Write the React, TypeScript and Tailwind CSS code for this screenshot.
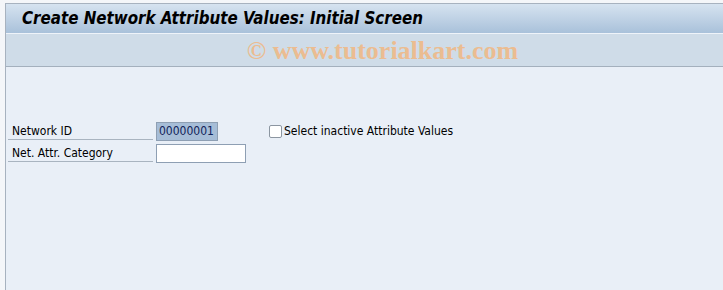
export default function App() {
  const font = { fontFamily: '"DejaVu Sans Condensed", "DejaVu Sans", sans-serif' }
  return (
    <div className="w-[723px] h-[290px] bg-[#f4f6f9] pl-[5px] pt-[3px] overflow-hidden" style={font}>
      <div className="h-full border-l border-t border-[#a7b2bf] flex flex-col bg-[#e9eff7]">
        <div className="h-[30px] bg-gradient-to-b from-[#d6e3f0] to-[#a9c1da] flex items-center pl-[16px] pt-[1px] border-b border-[#eef3f9]">
          <h1 className="text-[16.8px] font-bold italic text-black">
            Create Network Attribute Values: Initial Screen
          </h1>
        </div>
        <div className="h-[33px] bg-[#cfdce8] border-b border-[#a4b0bd] flex items-center justify-center pl-[36px] pt-[1px]">
          <span className="text-[26px] font-bold text-[#ebbc91] font-['Liberation_Serif',serif] leading-none">
            © www.tutorialkart.com
          </span>
        </div>
        <div className="pt-[53px] pl-[2px] text-[12px] text-black">
          <div className="flex items-center h-[22px]">
            <div className="w-[145px] h-[20px] border-b border-[#a9b4c0] flex items-end pl-[4px] self-start leading-[16px]">
              Network ID
            </div>
            <div className="ml-[3px] w-[62px] h-[19px] bg-[#a6bdd7] border border-[#8e9fb3] flex items-center pl-[2px] text-[#12245a]">
              00000001
            </div>
            <div className="ml-[51px] flex items-center">
              <span className="w-[13px] h-[13px] bg-white border border-[#8c96a1] rounded-[2px]" />
              <span className="ml-[2px]">Select inactive Attribute Values</span>
            </div>
          </div>
          <div className="flex items-center h-[22px]">
            <div className="w-[145px] h-[20px] border-b border-[#a9b4c0] flex items-end pl-[4px] self-start leading-[16px]">
              Net. Attr. Category
            </div>
            <div className="ml-[3px] w-[90px] h-[19px] bg-white border border-[#8e9fb3]" />
          </div>
        </div>
      </div>
    </div>
  )
}
